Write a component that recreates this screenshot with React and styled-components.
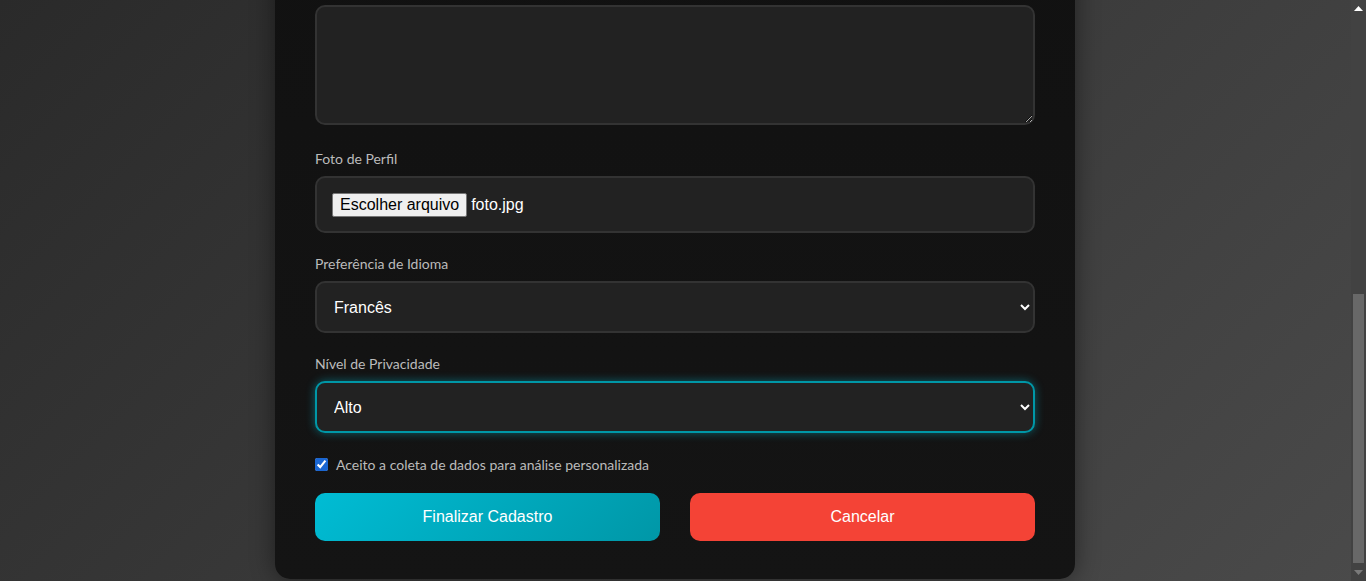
import React, { useLayoutEffect } from "react";
import styled, { createGlobalStyle } from "styled-components";

const GlobalStyle = createGlobalStyle`
  html {
    color-scheme: dark;
  }
  body {
    margin: 0;
    font-family: "Lato", "Segoe UI", sans-serif;
    background: linear-gradient(135deg, #2a2a2a 0%, #4a4a4a 100%) fixed;
    color: #eee;
  }
`;

const Page = styled.div`
  display: flex;
  justify-content: center;
  padding: 20px 16px 2px 0;
`;

const Card = styled.form`
  width: 800px;
  box-sizing: border-box;
  padding: 40px 40px 38px;
  background: linear-gradient(180deg, #0f0f0f 0%, #141414 100%);
  border-radius: 15px;
  box-shadow: 0 0 25px rgba(0, 0, 0, 0.45);
`;

const Title = styled.h2`
  margin: 0 0 10px;
  font-family: "Lato", sans-serif;
  font-size: 26px;
  font-weight: 700;
  color: #00bcd4;
  text-align: center;
`;

const Subtitle = styled.p`
  margin: 0 0 34px;
  font-size: 14px;
  color: #999;
  text-align: center;
`;

const Group = styled.div`
  margin-bottom: ${(p) => p.$space ?? 24}px;
`;

const Label = styled.label`
  display: block;
  margin-bottom: 10px;
  font-size: 14px;
  line-height: 14px;
  color: #bbbbbb;
`;

const fieldBase = `
  display: block;
  width: 100%;
  box-sizing: border-box;
  padding: 15px;
  border: 2px solid #333333;
  border-radius: 10px;
  background: #222222;
  color: #ffffff;
  font-family: "Liberation Sans", Arial, sans-serif;
  font-size: 16px;
  outline: none;
`;

const Input = styled.input`
  ${fieldBase}
`;

const TextArea = styled.textarea`
  ${fieldBase}
  height: 120px;
  resize: vertical;
`;

const Select = styled.select`
  ${fieldBase}
  height: 52px;
  padding-left: 13px;
  border-color: ${(p) => (p.$active ? "#0097a7" : "#333333")};
  box-shadow: ${(p) => (p.$active ? "0 0 10px rgba(0, 188, 212, 0.45)" : "none")};
  &:focus {
    border-color: #0097a7;
    box-shadow: 0 0 10px rgba(0, 188, 212, 0.45);
  }
`;

const FileBox = styled.div`
  ${fieldBase}
  display: flex;
  align-items: center;
  gap: 4px;
  height: 57px;
`;

const FileButton = styled.button`
  color-scheme: light;
  box-sizing: border-box;
  height: 24px;
  padding: 0 7px;
  border: 1px solid #767676;
  border-radius: 2px;
  background: #efefef;
  color: #000;
  font-family: "Liberation Sans", Arial, sans-serif;
  font-size: 16px;
  line-height: 20px;
`;

const FileName = styled.span`
  color: #fff;
  font-size: 16px;
`;

const CheckRow = styled.label`
  display: flex;
  align-items: center;
  gap: 8px;
  margin-bottom: 21px;
  font-size: 14px;
  line-height: 15px;
  color: #bbbbbb;
`;

const Check = styled.input`
  color-scheme: light;
  accent-color: #1a66d2;
  width: 13px;
  height: 13px;
  margin: 0;
`;

const Actions = styled.div`
  display: grid;
  grid-template-columns: 1fr 1fr;
  gap: 30px;
`;

const Button = styled.button`
  padding: 15px;
  border: none;
  border-radius: 10px;
  font-family: "Liberation Sans", Arial, sans-serif;
  font-size: 16px;
  line-height: 18px;
  color: #ffffff;
  cursor: pointer;
  background: ${(p) =>
    p.$variant === "cancel"
      ? "#f44336"
      : "linear-gradient(135deg, #00bcd4 0%, #0097a7 100%)"};
`;

/* Drawing of the browser's dark scrollbar, laid over the right edge */
const ScrollBar = styled.div`
  position: fixed;
  top: 0;
  right: 0;
  bottom: 0;
  width: 15px;
  display: flex;
  flex-direction: column;
  background: #424242;
`;

const ScrollArrow = styled.div`
  height: 17px;
  display: flex;
  align-items: center;
  justify-content: center;
  flex: none;
`;

const ScrollTrack = styled.div`
  flex: 1;
  display: flex;
  flex-direction: column;
  justify-content: flex-end;
  padding: 0 2px 1px;
`;

const ScrollThumb = styled.div`
  height: 269px;
  background: #686868;
`;

export default function App() {
  useLayoutEffect(() => {
    window.scrollTo(0, document.documentElement.scrollHeight);
  }, []);

  return (
    <>
      <GlobalStyle />
      <Page>
        <Card onSubmit={(e) => e.preventDefault()}>
          <Title>Cadastro de Usuário</Title>
          <Subtitle>Preencha os campos abaixo para criar sua conta</Subtitle>
          <Group>
            <Label>Nome Completo</Label>
            <Input defaultValue="Maria Silva" />
          </Group>
          <Group>
            <Label>E-mail</Label>
            <Input type="email" defaultValue="maria@email.com" />
          </Group>
          <Group>
            <Label>Senha</Label>
            <Input type="password" defaultValue="segredo123" />
          </Group>
          <Group>
            <Label>Data de Nascimento</Label>
            <Input defaultValue="12/05/1995" />
          </Group>
          <Group $space={27}>
            <Label>Biografia</Label>
            <TextArea />
          </Group>
          <Group>
            <Label>Foto de Perfil</Label>
            <FileBox>
              <FileButton type="button">Escolher arquivo</FileButton>
              <FileName>foto.jpg</FileName>
            </FileBox>
          </Group>
          <Group>
            <Label>Preferência de Idioma</Label>
            <Select defaultValue="fr">
              <option value="pt">Português</option>
              <option value="en">Inglês</option>
              <option value="fr">Francês</option>
            </Select>
          </Group>
          <Group>
            <Label>Nível de Privacidade</Label>
            <Select $active defaultValue="alto">
              <option value="baixo">Baixo</option>
              <option value="medio">Médio</option>
              <option value="alto">Alto</option>
            </Select>
          </Group>
          <CheckRow>
            <Check type="checkbox" defaultChecked />
            Aceito a coleta de dados para análise personalizada
          </CheckRow>
          <Actions>
            <Button type="submit">Finalizar Cadastro</Button>
            <Button type="button" $variant="cancel">
              Cancelar
            </Button>
          </Actions>
        </Card>
      </Page>
      <ScrollBar aria-hidden="true">
        <ScrollArrow>
          <svg width="9" height="5" viewBox="0 0 9 5">
            <path d="M0 5 L4.5 0 L9 5 Z" fill="#ffffff" />
          </svg>
        </ScrollArrow>
        <ScrollTrack>
          <ScrollThumb />
        </ScrollTrack>
        <ScrollArrow>
          <svg width="9" height="5" viewBox="0 0 9 5">
            <path d="M0 0 L4.5 5 L9 0 Z" fill="#7a7a7a" />
          </svg>
        </ScrollArrow>
      </ScrollBar>
    </>
  );
}
